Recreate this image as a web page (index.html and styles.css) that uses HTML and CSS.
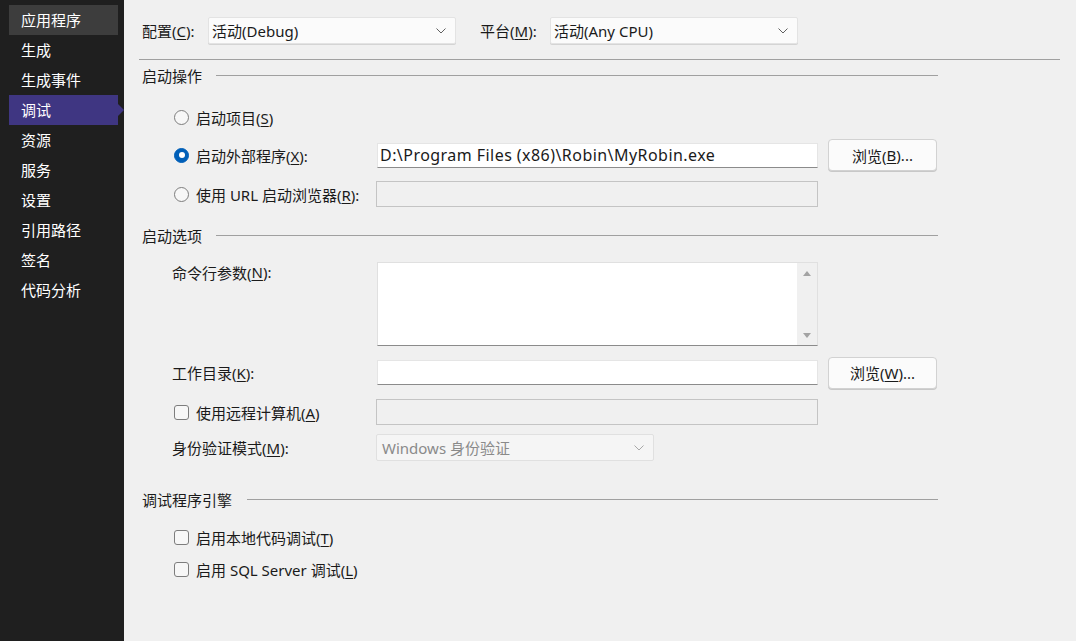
FILE: index.html
```html
<!DOCTYPE html>
<html lang="zh-CN">
<head>
<meta charset="utf-8">
<title>调试</title>
<link rel="stylesheet" href="styles.css">
</head>
<body>
<nav class="sidebar">
  <div class="nav-item hover">应用程序</div>
  <div class="nav-item">生成</div>
  <div class="nav-item">生成事件</div>
  <div class="nav-item active">调试</div>
  <div class="nav-item">资源</div>
  <div class="nav-item">服务</div>
  <div class="nav-item">设置</div>
  <div class="nav-item">引用路径</div>
  <div class="nav-item">签名</div>
  <div class="nav-item">代码分析</div>
</nav>
<main class="main">
  <div class="topbar">
    <span class="top-label">配置(<u>C</u>):</span>
    <div class="select top-select">
      <span>活动(Debug)</span>
      <svg class="chev" width="12" height="8" viewBox="0 0 12 8"><path d="M1.5 1.5 L6 6 L10.5 1.5" fill="none" stroke="#606060" stroke-width="1"/></svg>
    </div>
    <span class="top-label plat">平台(<u>M</u>):</span>
    <div class="select top-select">
      <span>活动(Any CPU)</span>
      <svg class="chev" width="12" height="8" viewBox="0 0 12 8"><path d="M1.5 1.5 L6 6 L10.5 1.5" fill="none" stroke="#606060" stroke-width="1"/></svg>
    </div>
  </div>
  <div class="sep"></div>

  <section class="group">
    <div class="group-head h1"><span>启动操作</span><i class="rule"></i></div>

    <div class="row r-radio1">
      <span class="radio"></span><span class="opt">启动项目(<u>S</u>)</span>
    </div>
    <div class="row r-ext">
      <div class="lab"><span class="radio on"></span><span class="opt">启动外部程序(<u>X</u>):</span></div>
      <div class="input">D:\Program Files (x86)\Robin\MyRobin.exe</div>
      <div class="btn">浏览(<u>B</u>)...</div>
    </div>
    <div class="row r-url">
      <div class="lab"><span class="radio"></span><span class="opt">使用 URL 启动浏览器(<u>R</u>):</span></div>
      <div class="input disabled"></div>
    </div>

    <div class="group-head h2"><span>启动选项</span><i class="rule"></i></div>

    <div class="row r-args">
      <div class="lab plain top">命令行参数(<u>N</u>):</div>
      <div class="textarea">
        <div class="ta-body"></div>
        <div class="ta-scroll">
          <svg width="10" height="8" viewBox="0 0 10 8"><path d="M1 7 L5 2 L9 7 Z" fill="#a3a3a3"/></svg>
          <svg width="10" height="8" viewBox="0 0 10 8"><path d="M1 1 L5 6 L9 1 Z" fill="#a3a3a3"/></svg>
        </div>
      </div>
    </div>
    <div class="row r-dir">
      <div class="lab plain">工作目录(<u>K</u>):</div>
      <div class="input"></div>
      <div class="btn">浏览(<u>W</u>)...</div>
    </div>
    <div class="row r-remote">
      <div class="lab"><span class="check"></span><span class="opt">使用远程计算机(<u>A</u>)</span></div>
      <div class="input disabled"></div>
    </div>
    <div class="row r-auth">
      <div class="lab plain">身份验证模式(<u>M</u>):</div>
      <div class="select disabled auth">
        <span>Windows 身份验证</span>
        <svg class="chev" width="12" height="8" viewBox="0 0 12 8"><path d="M1.5 1.5 L6 6 L10.5 1.5" fill="none" stroke="#a8a8a8" stroke-width="1"/></svg>
      </div>
    </div>

    <div class="group-head h3"><span>调试程序引擎</span><i class="rule"></i></div>

    <div class="row r-cb1">
      <span class="check"></span><span class="opt">启用本地代码调试(<u>T</u>)</span>
    </div>
    <div class="row r-cb2">
      <span class="check"></span><span class="opt">启用 SQL Server 调试(<u>L</u>)</span>
    </div>
  </section>
</main>
</body>
</html>
```

FILE: styles.css
```css
* { box-sizing: border-box; }
html, body { margin: 0; padding: 0; }
body {
  width: 1076px;
  height: 641px;
  display: flex;
  font-family: "Noto Sans", "Noto Sans CJK SC", sans-serif;
  font-size: 15px;
  color: #1a1a1a;
  overflow: hidden;
}
u { text-decoration: underline; text-underline-offset: 2px; text-decoration-thickness: 1px; }

.sidebar {
  width: 124px;
  flex: none;
  background: #1f1f1f;
  padding: 5px 0 0 9px;
}
.nav-item {
  position: relative;
  width: 109px;
  height: 30px;
  line-height: 30px;
  padding-left: 12px;
  color: #ffffff;
  font-size: 15px;
}
.nav-item.hover { background: #3d3d3d; }
.nav-item.active { background: #3f3682; }
.nav-item.active::after {
  content: "";
  position: absolute;
  right: -6px;
  top: 9px;
  border-left: 6px solid #3f3682;
  border-top: 6px solid transparent;
  border-bottom: 6px solid transparent;
}

.main {
  flex: 1;
  background: #f0f0f0;
  padding: 17px 16px 0 15px;
}

.topbar {
  display: flex;
  align-items: center;
  height: 27px;
}
.top-label { width: 69px; padding-left: 3px; white-space: nowrap; }
.top-label.plat { width: 94px; padding-left: 24px; }
.select {
  height: 27px;
  display: flex;
  align-items: center;
  justify-content: space-between;
  padding: 0 8px 0 3px;
  background: #fbfbfb;
  border: 1px solid #e3e3e3;
  border-radius: 2px;
  box-shadow: 0 1px 0 #d4d4d4;
  font-size: 15px;
}
.top-select { width: 248px; }
.select.disabled {
  background: #f5f5f5;
  border-color: #e0e0e0;
  box-shadow: none;
  color: #8a8a8a;
  padding-left: 5px;
}
.auth { width: 278px; margin-left: -1px; }

.sep { height: 1px; background: #a0a0a0; margin-top: 15px; }

.group { width: 799px; }
.group-head {
  display: flex;
  align-items: center;
  height: 20px;
  padding-left: 3px;
}
.group-head .rule { flex: 1; height: 1px; background: #a0a0a0; margin-left: 14px; }
.h1 { margin-top: 5px; }
.h2 { margin-top: 18px; }
.h3 { margin-top: 28px; }
.h3 .rule { margin-left: 15px; }

.row { display: flex; align-items: center; padding-left: 35px; }
.lab { width: 203px; display: flex; align-items: center; flex: none; white-space: nowrap; }
.lab.plain { margin-left: -2px; width: 205px; }
.lab.top { align-self: flex-start; height: 20px; }

.opt { margin-left: 7px; white-space: nowrap; }

.radio {
  width: 15px; height: 15px;
  border-radius: 50%;
  border: 1px solid #7d7d7d;
  background: #f7f7f7;
  flex: none;
  position: relative;
}
.radio.on { background: #005fb8; border-color: #005fb8; }
.radio.on::after {
  content: "";
  position: absolute;
  left: 3.5px; top: 3.5px;
  width: 6px; height: 6px;
  border-radius: 50%;
  background: #ffffff;
}
.check {
  width: 15px; height: 15px;
  border: 1px solid #7d7d7d;
  border-radius: 3px;
  background: #f7f7f7;
  flex: none;
}

.input {
  width: 441px;
  height: 25px;
  background: #ffffff;
  border: 1px solid #e5e5e5;
  border-bottom-color: #8b8b8b;
  padding: 0 2px;
  line-height: 23px;
  font-size: 16px;
  letter-spacing: 0.45px;
  flex: none;
  white-space: nowrap;
  overflow: hidden;
}
.input.disabled {
  background: #f0f0f0;
  border: 1px solid #c4c4c4;
  height: 26px;
  width: 442px;
  margin-left: -1px;
}
.btn {
  width: 109px;
  height: 32px;
  margin-left: 10px;
  display: flex;
  align-items: center;
  justify-content: center;
  background: #fbfbfb;
  border: 1px solid #d2d2d2;
  border-radius: 4px;
  box-shadow: 0 1px 0 #c8c8c8;
  flex: none;
}

.r-radio1 { height: 26px; margin-top: 19px; }
.r-ext { height: 32px; margin-top: 9px; }
.r-url { height: 26px; margin-top: 10px; }
.r-args { height: 84px; margin-top: 17px; align-items: flex-start; }
.r-dir { height: 33px; margin-top: 10px; }
.r-remote { height: 26px; margin-top: 10px; }
.r-auth { height: 27px; margin-top: 9px; }
.r-cb1 { height: 26px; margin-top: 15px; }
.r-cb2 { height: 26px; margin-top: 6px; }

.textarea {
  width: 441px;
  height: 84px;
  display: flex;
  background: #ffffff;
  border: 1px solid #e0e0e0;
  border-bottom-color: #8b8b8b;
  flex: none;
}
.ta-body { flex: 1; }
.ta-scroll {
  width: 20px;
  background: #f0f0f0;
  display: flex;
  flex-direction: column;
  justify-content: space-between;
  align-items: center;
  padding: 6px 0 5px;
}
.ta-scroll svg { display: block; }
```
